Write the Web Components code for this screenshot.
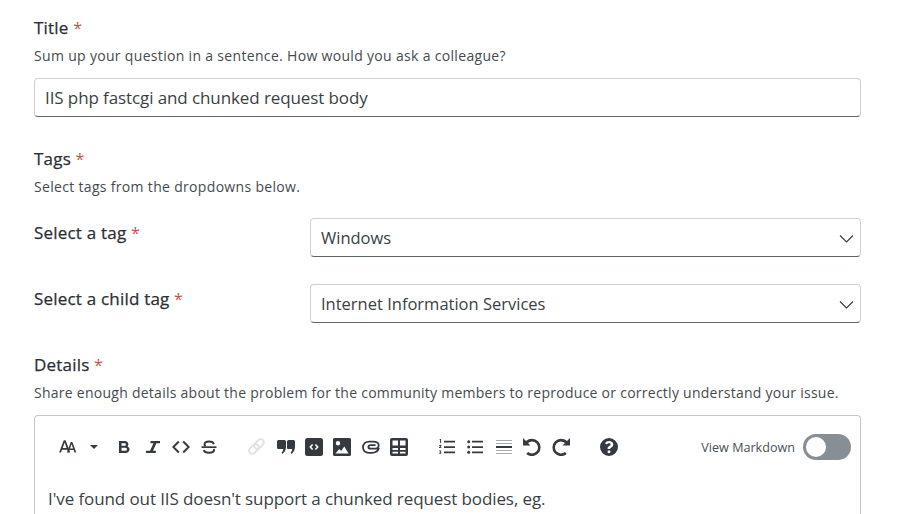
<!doctype html>
<html>
<head>
<meta charset="utf-8">
<style>
html, body { margin: 0; height: 514px; overflow: hidden; background: #fff; }
body { font-family: "Open Sans", "Noto Sans", sans-serif; color: #212529; }
</style>
</head>
<body>
<ask-form>
	<form-field label="Title" hint="Sum up your question in a sentence. How would you ask a colleague?">
		<text-box>IIS php fastcgi and chunked request body</text-box>
	</form-field>
	<form-field class="tags" label="Tags" hint="Select tags from the dropdowns below."></form-field>
	<select-row label="Select a tag">Windows</select-row>
	<select-row label="Select a child tag">Internet Information Services</select-row>
	<form-field class="details" style="--hint-spacing:.26px" label="Details" hint="Share enough details about the problem for the community members to reproduce or correctly understand your issue.">
		<rich-editor>I've found out IIS doesn't support a chunked request bodies, eg.</rich-editor>
	</form-field>
</ask-form>

<script>
const FONT = `"Open Sans", "Noto Sans", sans-serif`;
const LABEL_CSS = `font-size: 17px; line-height: 22px; font-weight: 500; letter-spacing: .2px; -webkit-text-stroke: .25px #2b2f33; color: #2b2f33;`;
const STAR_CSS = `font-style: normal; font-weight: 400; font-size: 16px; -webkit-text-stroke: 0; color: #c4534a;`;

class AskForm extends HTMLElement {
	constructor() {
		super();
		this.attachShadow({mode:"open"}).innerHTML = `
		<style>
		:host { display: block; width: 827px; padding: 17px 0 0 34px; }
		::slotted(.tags) { margin-top: 31px; margin-bottom: 22px; }
		::slotted(.details) { margin-top: 31px; }
		</style>
		<slot></slot>`;
	}
}

class FormField extends HTMLElement {
	constructor() {
		super();
		this.attachShadow({mode:"open"}).innerHTML = `
		<style>
		:host { display: block; }
		.label { ${LABEL_CSS} }
		.label i { ${STAR_CSS} }
		.hint { font-size: 14px; line-height: 18px; margin-top: 8px; letter-spacing: var(--hint-spacing, .32px); color: #454a4f; }
		.body { margin-top: 13px; }
		</style>
		<div class="label"></div>
		<div class="hint"></div>
		<div class="body"><slot></slot></div>`;
	}
	connectedCallback() {
		let label = this.shadowRoot.querySelector(".label");
		label.innerHTML = `${this.getAttribute("label")} <i>*</i>`;
		this.shadowRoot.querySelector(".hint").textContent = this.getAttribute("hint");
		if (!this.children.length) this.shadowRoot.querySelector(".body").style.display = "none";
	}
}

class TextBox extends HTMLElement {
	constructor() {
		super();
		this.attachShadow({mode:"open"}).innerHTML = `
		<style>
		:host {
			display: flex;
			align-items: center;
			box-sizing: border-box;
			height: 39px;
			padding: 0 10px;
			font-size: 17px;
			letter-spacing: -.1px;
			color: #3a3f44;
			background: #fff;
			border: 1px solid #ced0d2;
			border-bottom: 1px solid #60656a;
			border-radius: 4px;
		}
		</style>
		<slot></slot>`;
	}
}

class SelectRow extends HTMLElement {
	constructor() {
		super();
		this.attachShadow({mode:"open"}).innerHTML = `
		<style>
		:host { display: grid; grid-template-columns: 276px 1fr; margin-top: 27px; }
		:host(:first-of-type) { margin-top: 0; }
		.label { ${LABEL_CSS} padding-top: 4px; }
		.label i { ${STAR_CSS} }
		.box {
			display: flex;
			align-items: center;
			justify-content: space-between;
			box-sizing: border-box;
			height: 39px;
			padding: 0 7px 0 10px;
			font-size: 16.5px;
			color: #3a3f44;
			border: 1px solid #ced0d2;
			border-bottom: 1px solid #60656a;
			border-radius: 4px;
		}
		svg { width: 16px; height: 16px; overflow: visible; }
		</style>
		<div class="label"></div>
		<div class="box"><span><slot></slot></span>
			<svg viewBox="0 0 16 16"><path d="M3 5.500 9.500 12 16 5.500" fill="none" stroke="#343a40" stroke-width="1.100"/></svg>
		</div>`;
	}
	connectedCallback() {
		this.shadowRoot.querySelector(".label").innerHTML = `${this.getAttribute("label")} <i>*</i>`;
	}
}

const ICONS = {
	size: `<path d="M1 14 5.200 3h1.600L11 14H9.200l-.9-2.600H3.600L2.700 14zM4.200 9.900h3.500L6 5z"/><path d="M8.500 14 12 4.500h1.400L17 14h-1.600l-.8-2.300h-3.800L10 14zm2.800-3.600h2.800L12.700 6.600z" transform="translate(-.5 0)"/>`,
	bold: `<path fill-rule="evenodd" d="M4 3h6a3.300 3.300 0 0 1 2.600 5.400A3.500 3.500 0 0 1 11 15H4zm2.500 2.200v2.500h3.200a1.250 1.250 0 0 0 0-2.500zm0 4.600v3h4a1.500 1.500 0 0 0 0-3z"/>`,
	italic: `<path d="M6.500 3H16v2.200h-3.600L9 12.800h2.800V15H2v-2.200h4L9.500 5.200h-3z"/>`,
	code: `<path d="M6.800 3.500 1.300 9l5.500 5.500M11.200 3.500 16.700 9l-5.500 5.500" fill="none" stroke="currentColor" stroke-width="2"/>`,
	strike: `<path d="M1.500 8.300h15v1.700h-15z"/><path d="M13.800 6.200C13.400 4.400 11.600 3.500 9 3.500c-2.700 0-4.500 1.100-4.500 2.800 0 .8.400 1.400 1 1.900M13.600 11c.3.400.4.900.4 1.300 0 1.500-1.900 2.400-5 2.400-2.800 0-4.700-.9-5.200-2.600" fill="none" stroke="currentColor" stroke-width="2"/>`,
	link: `<g fill="none" stroke="#dfe1e3" stroke-width="2"><rect x="-5.500" y="-3.200" width="11" height="6.400" rx="3.200" transform="translate(5.900 11) rotate(-45)"/><rect x="-5.500" y="-3.200" width="11" height="6.400" rx="3.200" transform="translate(11.100 6) rotate(-45)"/></g>`,
	quote: `<path d="M0 3.500A1.500 1.500 0 0 1 1.500 2h6A1.500 1.500 0 0 1 9 3.500V9c0 3-1.400 5-3.500 7l-.9-1.300c1-.9 1.500-2.100 1.600-3.700H1.500A1.500 1.500 0 0 1 0 9.500zM10 3.500A1.500 1.500 0 0 1 11.500 2h5A1.500 1.500 0 0 1 18 3.500V9c0 3-1.400 5-3.500 7l-.9-1.300c1-.9 1.500-2.100 1.600-3.700h-4.700A1.500 1.500 0 0 1 10 9.500z"/>`,
	codeblock: `<rect width="18" height="18" rx="2.500"/><path d="M7.600 6.400 5.300 9l2.300 2.600M10.400 6.400 12.700 9l-2.300 2.600" fill="none" stroke="#fff" stroke-width="1.500"/>`,
	image: `<path fill-rule="evenodd" d="M1.500 0h15A1.500 1.500 0 0 1 18 1.500v15a1.500 1.500 0 0 1-1.500 1.500h-15A1.500 1.500 0 0 1 0 16.500v-15A1.500 1.500 0 0 1 1.500 0zM5 3a2.200 2.200 0 1 0 0 4.400A2.200 2.200 0 0 0 5 3zM2.500 15.500h13l-4.200-7-3.200 4.500-1.900-1.900z"/>`,
	clip: `<path d="M17 10c-.9 3-3.800 4.800-7.200 4.800H7c-3.700 0-6-2.300-6-5.500C1 6 3.600 3.700 7.300 3.700h3.800c3.300 0 5.600 1.500 5.600 3.700 0 2-1.600 3.300-4 3.300H8.800c-1.500 0-2.400-.7-2.400-1.700 0-1 .9-1.800 2.400-1.800h4.800" fill="none" stroke="currentColor" stroke-width="1.800"/>`,
	table: `<path fill-rule="evenodd" d="M2 0h14a2 2 0 0 1 2 2v14a2 2 0 0 1-2 2H2a2 2 0 0 1-2-2V2a2 2 0 0 1 2-2zM2.500 2.500v5h5.500v-5zm7.500 0v5h5.500v-5zM2.500 10v2h5.500v-2zm7.500 0v2h5.500v-2zM2.500 13.700v1.800h5.500v-1.800zm7.500 0v1.800h5.500v-1.800z"/>`,
	ol: `<path d="M6 2.800h11v1.700H6zM6 8.200h11v1.700H6zM6 13.600h11v1.700H6z"/><path d="M2 1h1.100v4H2.100V2H1.400zM1 7.300c.3-.5 1.800-.7 2.300 0 .4.700-.3 1.300-1 1.900h1.100V10H1v-.7c1-.9 1.400-1.300 1.200-1.500-.2-.2-.7 0-1 .2zM1.100 12.500h2.200l-.1.800-.7.600c.6 0 1 .4.900 1-.1.900-1.600 1.200-2.400.5l.4-.6c.4.300 1 .3 1.100 0 0-.3-.4-.4-.9-.3v-.6l.6-.6H1.100z"/>`,
	ul: `<circle cx="2.700" cy="3.700" r="1.500"/><circle cx="2.700" cy="9" r="1.500"/><circle cx="2.700" cy="14.300" r="1.500"/><path d="M6 2.800h11v1.700H6zM6 8.200h11v1.700H6zM6 13.500h11v1.700H6z"/>`,
	hr: `<path d="M1 2h16v1.100H1zM1 5h16v1.100H1zM1 12h16v1.100H1zM1 15h16v1.100H1z" fill="#a8abae"/><path d="M1 8h16v2H1z"/>`,
	undo: `<path d="M0 0v7.500h7.500L5 5A6 6 0 1 1 5.100 14L3.200 16A8.700 8.700 0 1 0 3 3z"/>`,
	redo: `<path d="M18 0v7.500h-7.500L13 5A6 6 0 1 0 12.900 14L14.800 16A8.700 8.700 0 1 1 15 3z"/>`,
	help: `<path fill-rule="evenodd" d="M9 0a9 9 0 1 1 0 18A9 9 0 0 1 9 0zM9 12.300a1.500 1.500 0 1 0 0 3 1.500 1.500 0 0 0 0-3zM9.200 3C7.200 3 5.900 3.900 5.100 5.300l1.600 1.200c.5-.7 1.100-1.300 2.300-1.300.9 0 1.600.5 1.600 1.200 0 .6-.5 1-1.400 1.500-1 .5-1.600 1.200-1.600 2.300v.8h2.700v-.5c0-.5.3-.7 1-1.100 1.100-.6 2-1.400 2-3 0-2-2-3.400-4.100-3.400z"/>`,
};

class EditorToolbar extends HTMLElement {
	constructor() {
		super();
		const icon = name => `<button title="${name}"><svg viewBox="0 0 18 18" width="18" height="18">${ICONS[name]}</svg></button>`;
		this.attachShadow({mode:"open"}).innerHTML = `
		<style>
		:host {
			display: flex;
			align-items: center;
			height: 20px;
			color: #343a40;
			font-family: ${FONT};
		}
		.group { display: flex; align-items: center; }
		button {
			display: flex;
			align-items: center;
			justify-content: center;
			width: 28.400px;
			height: 20px;
			padding: 0;
			border: 0;
			background: none;
			color: inherit;
		}
		svg { fill: currentColor; display: block; }
		.caret { width: 0; height: 0; border: 4px solid transparent; border-top-color: #343a40; border-bottom: 0; margin-left: 12px; }
		.right { margin-left: auto; display: flex; align-items: center; gap: 8px; font-size: 12.600px; color: #495057; }
		.switch { width: 48px; height: 26px; box-sizing: border-box; border-radius: 13px; background: #868e96; position: relative; }
		.switch::after { content: ""; position: absolute; left: 3px; top: 3px; width: 20px; height: 20px; border-radius: 50%; background: #fff; }
		</style>
		<div class="group">
			<button style="width:30px;justify-content:flex-end"><svg viewBox="0 0 18 18" width="20" height="20">${ICONS.size}</svg></button>
			<span class="caret"></span>
		</div>
		<div class="group" style="margin-left:12px">${["bold","italic","code","strike"].map(icon).join("")}</div>
		<div class="group" style="margin-left:19.500px">${["link","quote","codeblock","image","clip","table"].map(icon).join("")}</div>
		<div class="group" style="margin-left:19.500px">${["ol","ul","hr","undo","redo"].map(icon).join("")}</div>
		<div class="group" style="margin-left:20px">${icon("help")}</div>
		<div class="right"><span>View Markdown</span><div class="switch"></div></div>`;
	}
}

class RichEditor extends HTMLElement {
	constructor() {
		super();
		this.attachShadow({mode:"open"}).innerHTML = `
		<style>
		:host {
			display: block;
			box-sizing: border-box;
			height: 99px;
			padding: 21px 9px 0 13px;
			border: 1px solid #c4c6c8;
			border-bottom: 0;
			border-radius: 4px 4px 0 0;
		}
		.text { margin-top: 31px; font-size: 17px; letter-spacing: -.1px; line-height: 22px; color: #3a3f44; }
		</style>
		<editor-toolbar></editor-toolbar>
		<div class="text"><slot></slot></div>`;
	}
}

customElements.define("ask-form", AskForm);
customElements.define("form-field", FormField);
customElements.define("text-box", TextBox);
customElements.define("select-row", SelectRow);
customElements.define("editor-toolbar", EditorToolbar);
customElements.define("rich-editor", RichEditor);
</script>
</body>
</html>
